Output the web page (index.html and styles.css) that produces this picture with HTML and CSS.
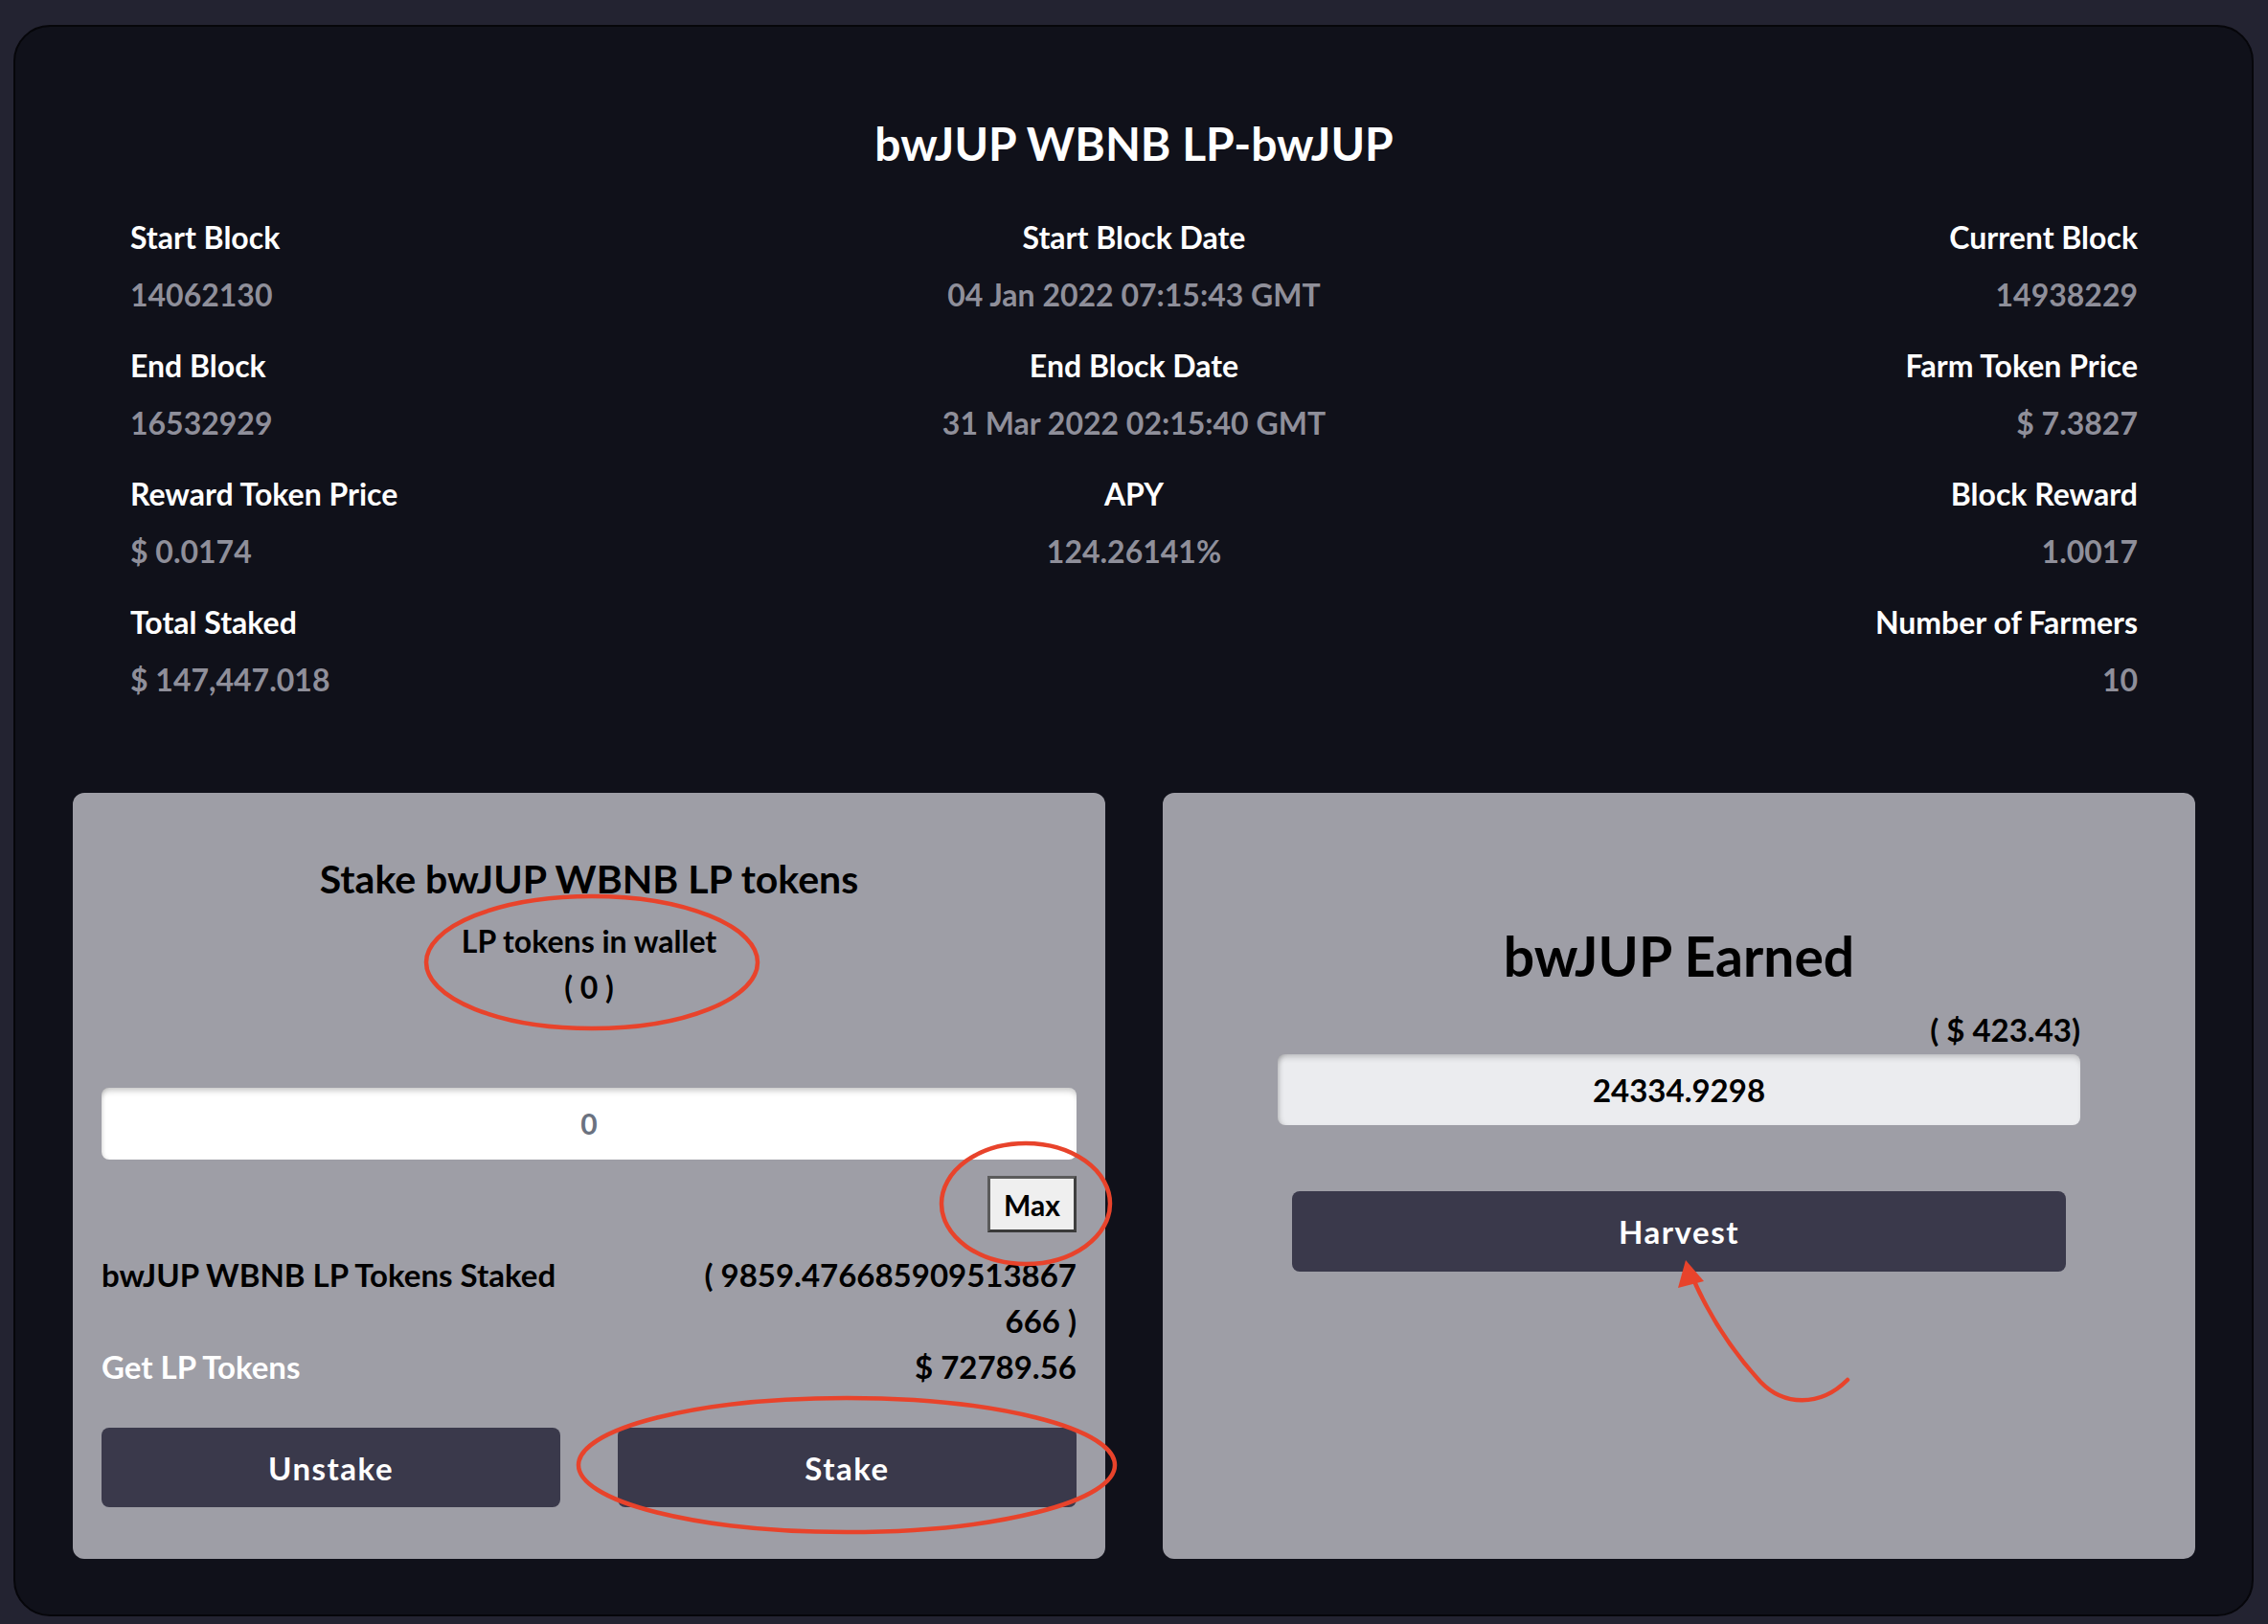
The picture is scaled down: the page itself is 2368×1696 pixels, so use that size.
FILE: index.html
```html
<!DOCTYPE html>
<html lang="en">
<head>
<meta charset="utf-8">
<title>bwJUP WBNB LP-bwJUP</title>
<link rel="stylesheet" href="styles.css">
</head>
<body>
<div class="card">
  <h1 class="title">bwJUP WBNB LP-bwJUP</h1>
  <div class="stats">
    <div class="stat al-left"><div class="label">Start Block</div><div class="value">14062130</div></div>
    <div class="stat al-center"><div class="label">Start Block Date</div><div class="value">04 Jan 2022 07:15:43 GMT</div></div>
    <div class="stat al-right"><div class="label">Current Block</div><div class="value">14938229</div></div>

    <div class="stat al-left"><div class="label">End Block</div><div class="value">16532929</div></div>
    <div class="stat al-center"><div class="label">End Block Date</div><div class="value">31 Mar 2022 02:15:40 GMT</div></div>
    <div class="stat al-right"><div class="label">Farm Token Price</div><div class="value">$ 7.3827</div></div>

    <div class="stat al-left"><div class="label">Reward Token Price</div><div class="value">$ 0.0174</div></div>
    <div class="stat al-center"><div class="label">APY</div><div class="value">124.26141%</div></div>
    <div class="stat al-right"><div class="label">Block Reward</div><div class="value">1.0017</div></div>

    <div class="stat al-left"><div class="label">Total Staked</div><div class="value">$ 147,447.018</div></div>
    <div class="stat al-center"></div>
    <div class="stat al-right"><div class="label">Number of Farmers</div><div class="value">10</div></div>
  </div>

  <div class="panels">
    <section class="panel stake-panel">
      <h2 class="panel-title">Stake bwJUP WBNB LP tokens</h2>
      <div class="wallet">
        <div>LP tokens in wallet</div>
        <div>( 0 )</div>
      </div>
      <div class="amount-input">0</div>
      <div class="max-row"><button class="max-btn">Max</button></div>
      <div class="info-row first-info">
        <span class="info-label">bwJUP WBNB LP Tokens Staked</span>
        <span class="info-value">( 9859.476685909513867<br>666 )</span>
      </div>
      <div class="info-row">
        <span class="info-label light">Get LP Tokens</span>
        <span class="info-value">$ 72789.56</span>
      </div>
      <div class="actions">
        <button class="action-btn">Unstake</button>
        <button class="action-btn">Stake</button>
      </div>
    </section>

    <section class="panel earn-panel">
      <h2 class="earn-title">bwJUP Earned</h2>
      <div class="earn-usd">( $ 423.43)</div>
      <div class="earn-box">24334.9298</div>
      <button class="action-btn harvest">Harvest</button>
    </section>
  </div>
</div>

<svg class="annotations" width="2368" height="1696" viewBox="0 0 2368 1696" xmlns="http://www.w3.org/2000/svg">
  <g fill="none" stroke="#e8432b" stroke-width="4.5" stroke-linecap="round">
    <ellipse cx="618" cy="1005" rx="173" ry="69"/>
    <ellipse cx="1071" cy="1257" rx="88" ry="63"/>
    <ellipse cx="884" cy="1530" rx="280" ry="70"/>
    <path d="M1929 1441 C1900 1470 1862 1468 1838 1443 C1806 1408 1784 1372 1768 1336"/>
  </g>
  <polygon points="1760,1316 1752,1345 1779,1338" fill="#e8432b"/>
</svg>
</body>
</html>
```
FILE: styles.css
```css
html, body {
  margin: 0;
}

body {
  position: relative;
  background: #232331;
  padding: 26px 15px 8px 14px;
  font-family: Lato, "Liberation Sans", sans-serif;
  font-weight: 700;
}

.card {
  box-sizing: border-box;
  height: 1662px;
  background: #10111a;
  border: 2px solid #06060a;
  border-radius: 38px;
  padding: 92px 59px 0 60px;
}

.title {
  margin: 0;
  text-align: center;
  color: #ffffff;
  font-size: 48px;
  line-height: 60px;
  font-weight: 700;
}

.stats {
  margin-top: 38px;
  padding: 0 60px;
  display: grid;
  grid-template-columns: 1fr 1fr 1fr;
  row-gap: 14px;
}

.stat {
  min-height: 120px;
}

.al-left { text-align: left; }
.al-center { text-align: center; }
.al-right { text-align: right; }

.label {
  color: #ffffff;
  font-size: 32px;
  line-height: 60px;
}

.value {
  color: #8f8f9a;
  font-size: 32px;
  line-height: 60px;
}

.panels {
  margin-top: 88px;
  display: grid;
  grid-template-columns: 1fr 1fr;
  column-gap: 60px;
}

.panel {
  box-sizing: border-box;
  height: 800px;
  background: #9e9ea6;
  border-radius: 12px;
  color: #000000;
}

.stake-panel {
  padding: 66px 30px 54px;
}

.panel-title {
  margin: 0;
  text-align: center;
  font-size: 41px;
  line-height: 48px;
  font-weight: 700;
}

.wallet {
  margin-top: 17px;
  text-align: center;
  font-size: 32px;
  line-height: 48px;
}

.amount-input {
  margin-top: 81px;
  height: 75px;
  line-height: 75px;
  background: #ffffff;
  border-radius: 8px;
  box-shadow: inset 0 6px 6px -3px rgba(0, 0, 0, 0.22), inset 3px 0 4px -2px rgba(0, 0, 0, 0.12);
  text-align: center;
  color: #6b7280;
  font-size: 30px;
}

.max-row {
  margin-top: 17px;
  display: flex;
  justify-content: flex-end;
}

.max-btn {
  box-sizing: border-box;
  height: 59px;
  width: 93px;
  padding: 0;
  background: #efefef;
  border: 3px solid #5b5b5b;
  border-right-color: #3f3f3f;
  border-bottom-color: #3a3a3a;
  font-family: Lato, "Liberation Sans", sans-serif;
  font-weight: 700;
  font-size: 30px;
  color: #000000;
}

.info-row {
  display: flex;
  justify-content: space-between;
  align-items: flex-start;
  font-size: 33px;
  line-height: 48px;
}

.first-info {
  margin-top: 20px;
}

.info-value {
  text-align: right;
}

.light {
  color: #ffffff;
}

.actions {
  margin-top: 40px;
  display: grid;
  grid-template-columns: 1fr 1fr;
  column-gap: 60px;
}

.action-btn {
  height: 83px;
  border: none;
  border-radius: 8px;
  background: #3a394b;
  color: #ffffff;
  font-family: Lato, "Liberation Sans", sans-serif;
  font-weight: 700;
  font-size: 33px;
  letter-spacing: 1.5px;
}

.earn-panel {
  display: flex;
  flex-direction: column;
  padding: 135px 120px 0;
}

.earn-title {
  margin: 0;
  text-align: center;
  font-size: 57px;
  line-height: 70px;
  font-weight: 700;
}

.earn-usd {
  margin-top: 22px;
  text-align: right;
  font-size: 33px;
  line-height: 40px;
}

.earn-box {
  margin-top: 6px;
  height: 74px;
  line-height: 74px;
  background: #ebecef;
  border-radius: 8px;
  box-shadow: inset 0 6px 6px -3px rgba(0, 0, 0, 0.2), inset 5px 0 5px -3px rgba(0, 0, 0, 0.18);
  text-align: center;
  font-size: 33px;
}

.harvest {
  margin: 69px 15px 0;
  height: 84px;
}

.annotations {
  position: absolute;
  top: 0;
  left: 0;
  pointer-events: none;
}
```
